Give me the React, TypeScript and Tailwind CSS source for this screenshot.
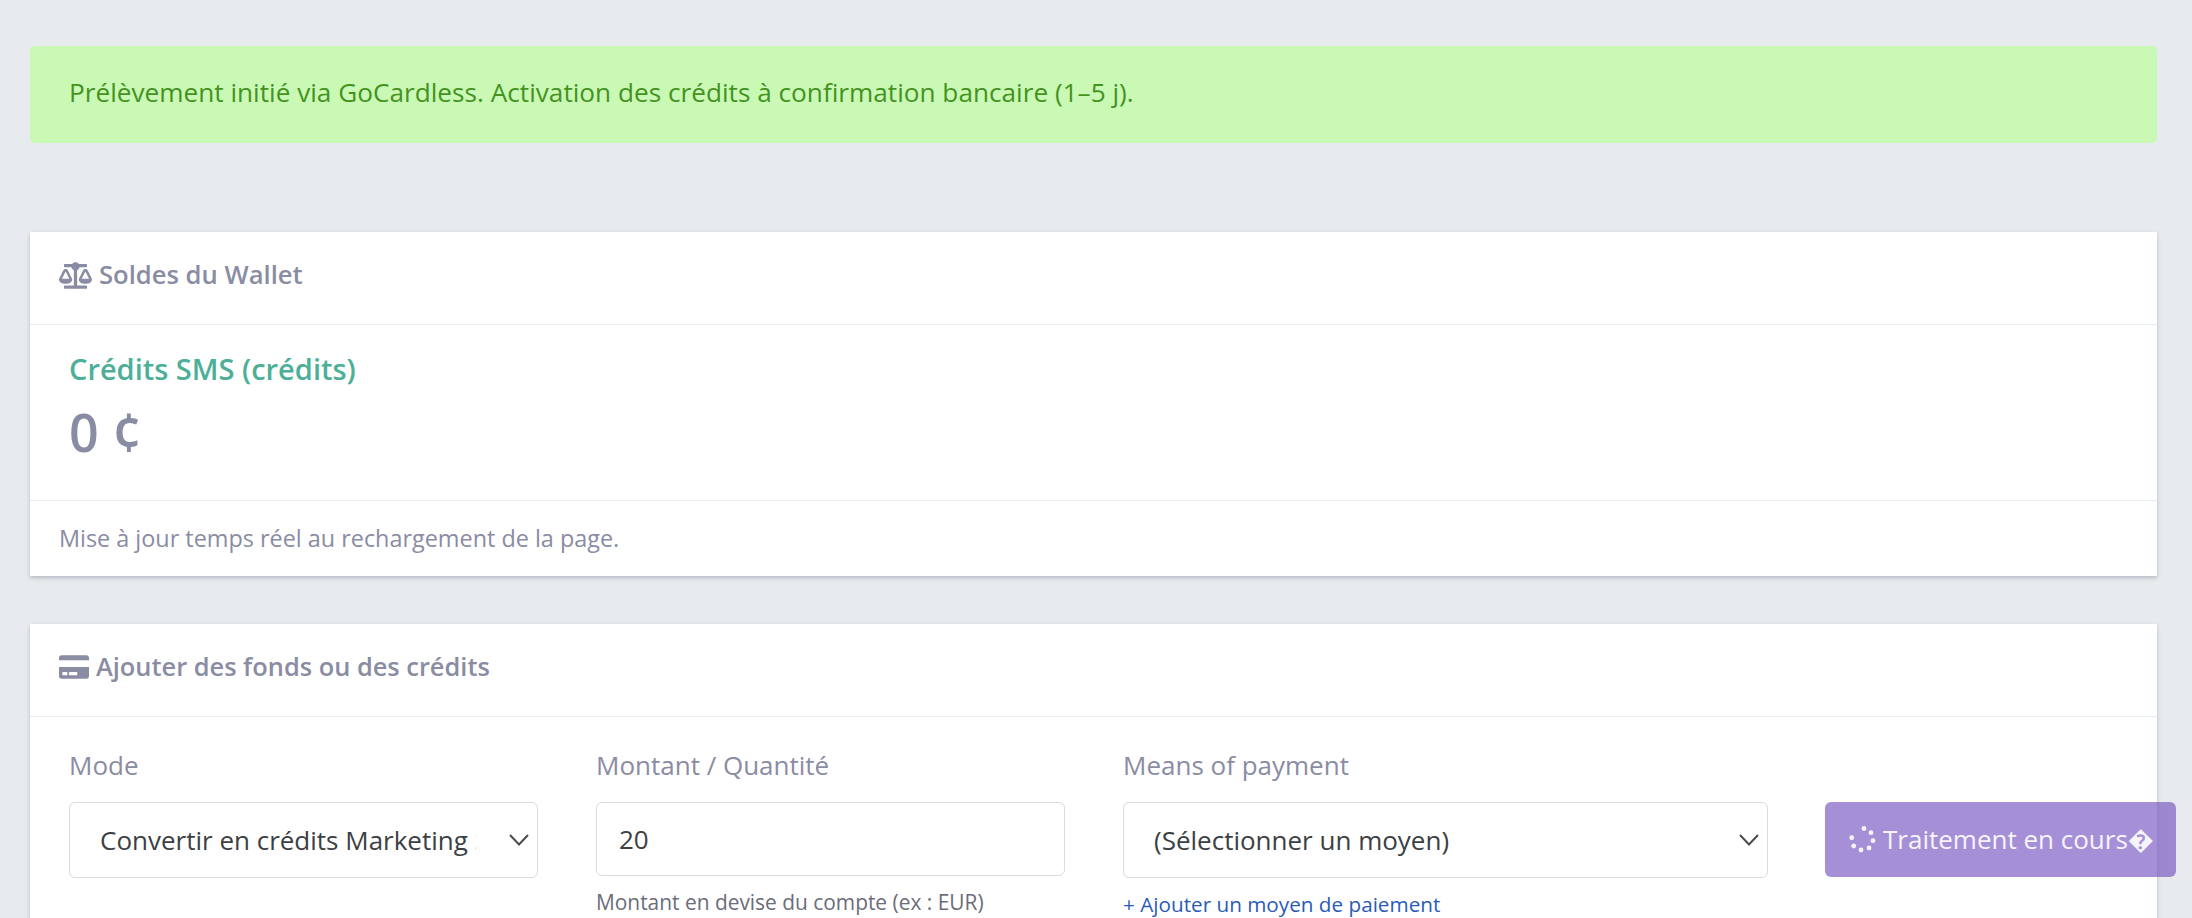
import { FaBalanceScale, FaCreditCard } from 'react-icons/fa';

function Spinner() {
  // seven dots, the gap sits at the top left
  const dots = [
    [15, 2.5],
    [22, 6.7],
    [24, 14.7],
    [20, 22],
    [12, 24],
    [4.7, 20],
    [2.7, 11.7],
  ];
  return (
    <svg viewBox="0 0 27 27" className="w-[27px] h-[27px] shrink-0" fill="currentColor">
      {dots.map(([cx, cy]) => (
        <circle key={`${cx}-${cy}`} cx={cx} cy={cy} r={2.4} />
      ))}
    </svg>
  );
}

function Chevron() {
  return (
    <svg viewBox="0 0 20 12" className="ml-auto w-[20px] h-[12px] shrink-0" fill="none" stroke="#4a4e52" strokeWidth="2">
      <path d="M1 1l9 9.5 9-9.5" />
    </svg>
  );
}

function SelectBox({ label, children }: { label: string; children: React.ReactNode }) {
  return (
    <div className="flex flex-col">
      <label className="text-[26px] leading-[34px] text-[#8a8ca3] mb-[19px] -translate-y-px">{label}</label>
      <div className="h-[76px] bg-white border border-[#d8dbe0] rounded-[6px] pl-[30px] pr-[8px] flex items-center text-[#3c4043] text-[26px]">
        {children}
      </div>
    </div>
  );
}

export default function App() {
  return (
    <div
      className="h-[918px] overflow-hidden bg-[#e8ebee] pl-[30px] pr-[35px] pt-[46px]"
      style={{ fontFamily: '"Open Sans", "Liberation Sans", sans-serif' }}
    >
      <div className="h-[97px] bg-[#caf9b6] text-[#44931e] rounded-[5px] px-[39px] pb-[3px] flex items-center text-[26.2px]">
        Prélèvement initié via GoCardless. Activation des crédits à confirmation bancaire (1–5 j).
      </div>

      <div className="mt-[89px] bg-white shadow-[0_2px_4px_rgba(60,75,100,0.3)]">
        <div className="h-[93px] border-b border-[#e8ebee] pl-[29px] pb-[6px] flex items-center gap-[7px] text-[#8a8ca3]">
          <FaBalanceScale className="w-[33px] h-[33px]" />
          <span className="text-[25.6px] font-semibold">Soldes du Wallet</span>
        </div>
        <div className="h-[176px] border-b border-[#e8ebee] pl-[39px] pt-[22px]">
          <div className="text-[29px] leading-[44px] font-semibold text-[#4caf98]">Crédits SMS (crédits)</div>
          <div className="text-[52px] leading-[72px] mt-[5px] font-semibold text-[#8a8ca3]">0 ¢</div>
        </div>
        <div className="h-[75px] pl-[29px] flex items-center text-[23.4px] text-[#8a8ca3]">
          Mise à jour temps réel au rechargement de la page.
        </div>
      </div>

      <div className="mt-[48px] bg-white shadow-[0_2px_4px_rgba(60,75,100,0.3)]">
        <div className="h-[93px] border-b border-[#e8ebee] pl-[29px] pb-[7px] flex items-center gap-[7px] text-[#8a8ca3]">
          <FaCreditCard className="w-[30px] h-[30px]" />
          <span className="text-[25.4px] font-semibold">Ajouter des fonds ou des crédits</span>
        </div>
        <div className="pl-[39px] pt-[32px] grid grid-cols-[469px_469px_645px_1fr] gap-x-[58px] h-[400px]">
          <SelectBox label="Mode">
            <span className="w-[376px] overflow-hidden whitespace-nowrap">Convertir en crédits Marketing SMS</span>
            <Chevron />
          </SelectBox>
          <div className="flex flex-col">
            <label className="text-[26px] leading-[34px] text-[#8a8ca3] mb-[19px] -translate-y-px">Montant / Quantité</label>
            <div className="h-[74px] bg-white border border-[#d8dbe0] rounded-[6px] pl-[22px] flex items-center text-[#3c4043] text-[26px]">
              20
            </div>
            <p className="mt-[12px] text-[20.9px] leading-[28px] text-[#6b6d7a] whitespace-nowrap">Montant en devise du compte (ex : EUR)</p>
          </div>
          <div className="flex flex-col">
            <SelectBox label="Means of payment">
              <span className="whitespace-nowrap">(Sélectionner un moyen)</span>
              <Chevron />
            </SelectBox>
            <a className="mt-[12px] text-[20.7px] leading-[28px] text-[#2a5bb8]">+ Ajouter un moyen de paiement</a>
          </div>
          <div className="pt-[53px] -ml-px">
            <button className="h-[75px] w-[351px] rounded-[6px] bg-[#7553c0]/65 text-white/90 text-[26px] pl-[24px] flex items-center gap-[7px] whitespace-nowrap">
              <Spinner />
              Traitement en cours{'\uFFFD'}
            </button>
          </div>
        </div>
      </div>
    </div>
  );
}
